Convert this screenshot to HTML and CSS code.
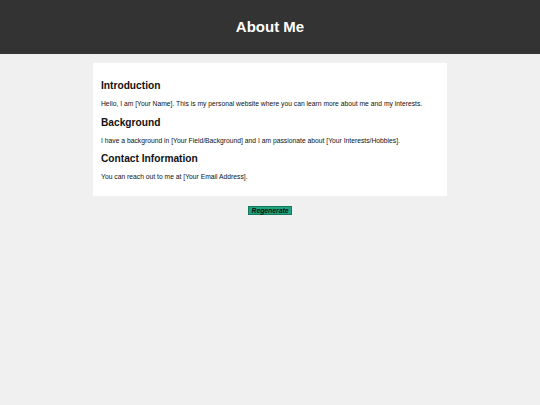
FILE: index.html
```html
<!DOCTYPE html>
<html lang="en">
<head>
<meta charset="utf-8">
<title>About Me</title>
<link rel="stylesheet" href="styles.css">
</head>
<body>
<header class="site-header">
  <h1 class="site-title">About Me</h1>
</header>
<main class="card">
  <section class="section">
    <h2 class="section-title">Introduction</h2>
    <p class="section-text">Hello, I am [Your Name]. This is my personal website where you can learn more about me and my interests.</p>
  </section>
  <section class="section">
    <h2 class="section-title">Background</h2>
    <p class="section-text">I have a background in [Your Field/Background] and I am passionate about [Your Interests/Hobbies].</p>
  </section>
  <section class="section">
    <h2 class="section-title">Contact Information</h2>
    <p class="section-text">You can reach out to me at [Your Email Address].</p>
  </section>
</main>
<div class="actions">
  <button class="regen-btn" type="button">Regenerate</button>
</div>
</body>
</html>
```
FILE: styles.css
```css
html, body {
  margin: 0;
  padding: 0;
}
body {
  background: #f0f0f0;
  font-family: "Liberation Sans", Arial, sans-serif;
  color: #111;
}
.site-header {
  background: #333333;
  height: 54px;
  display: flex;
  align-items: center;
  justify-content: center;
}
.site-title {
  margin: 0;
  color: #fff;
  font-size: 15px;
  font-weight: bold;
  line-height: 1.15;
}
.card {
  display: block;
  width: 338px;
  margin: 9px auto 0;
  padding: 8px;
  background: #fff;
}
.section-title {
  font-size: 10.2px;
  font-weight: bold;
  line-height: 12px;
  margin: 8.5px 0 8px;
}
.section:first-child .section-title {
  margin-top: 9px;
}
.section-text {
  font-size: 6.75px;
  line-height: 8px;
  margin: 7px 0;
}
.actions {
  display: flex;
  justify-content: center;
  margin-top: 9.5px;
}
.regen-btn {
  font-family: "Liberation Sans", Arial, sans-serif;
  font-size: 6.8px;
  font-weight: bold;
  font-style: italic;
  line-height: 7px;
  color: #111;
  background: #22a37f;
  border: 0.5px solid #15775b;
  padding: 0 2px;
  margin: 0;
  cursor: pointer;
}
```
